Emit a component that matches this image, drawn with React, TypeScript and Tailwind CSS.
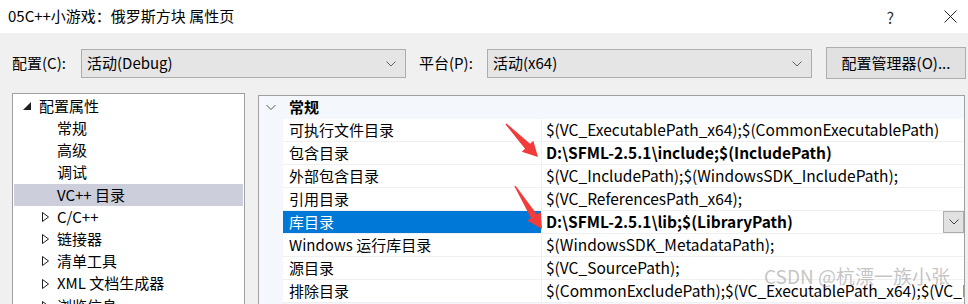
import React from 'react';

const FONT = { fontFamily: '"Noto Sans CJK SC", "Noto Sans", sans-serif' };

const treeItems: { label: string; kind: 'root' | 'leaf' | 'branch'; selected?: boolean }[] = [
  { label: '配置属性', kind: 'root' },
  { label: '常规', kind: 'leaf' },
  { label: '高级', kind: 'leaf' },
  { label: '调试', kind: 'leaf' },
  { label: 'VC++ 目录', kind: 'leaf', selected: true },
  { label: 'C/C++', kind: 'branch' },
  { label: '链接器', kind: 'branch' },
  { label: '清单工具', kind: 'branch' },
  { label: 'XML 文档生成器', kind: 'branch' },
  { label: '浏览信息', kind: 'branch' },
];

const rows: { name: string; value: string; bold?: boolean; selected?: boolean }[] = [
  { name: '可执行文件目录', value: '$(VC_ExecutablePath_x64);$(CommonExecutablePath)' },
  { name: '包含目录', value: 'D:\\SFML-2.5.1\\include;$(IncludePath)', bold: true },
  { name: '外部包含目录', value: '$(VC_IncludePath);$(WindowsSDK_IncludePath);' },
  { name: '引用目录', value: '$(VC_ReferencesPath_x64);' },
  { name: '库目录', value: 'D:\\SFML-2.5.1\\lib;$(LibraryPath)', bold: true, selected: true },
  { name: 'Windows 运行库目录', value: '$(WindowsSDK_MetadataPath);' },
  { name: '源目录', value: '$(VC_SourcePath);' },
  { name: '排除目录', value: '$(CommonExcludePath);$(VC_ExecutablePath_x64);$(VC_LibraryPath_x64)' },
];

function Chevron({ className = '' }: { className?: string }) {
  return (
    <svg width="10" height="6" viewBox="0 0 10 6" className={className}>
      <path d="M0.5 0.5 L5 5 L9.5 0.5" fill="none" stroke="currentColor" strokeWidth="1" />
    </svg>
  );
}

function Combo({ value, width }: { value: string; width: string }) {
  return (
    <div className={`${width} h-[29px] bg-[#e5e5e5] border border-[#adadad] flex items-center pl-[5px] pr-[9px]`}>
      <span className="flex-1 text-[15px] text-black">{value}</span>
      <Chevron className="text-[#606060]" />
    </div>
  );
}

// red callout arrow from tail to tip
function Arrow({ x1, y1, x2, y2 }: { x1: number; y1: number; x2: number; y2: number }) {
  const dx = x2 - x1;
  const dy = y2 - y1;
  const len = Math.hypot(dx, dy);
  const ux = dx / len;
  const uy = dy / len;
  const nx = -uy;
  const ny = ux;
  const head = 15;
  const bx = x2 - ux * head;
  const by = y2 - uy * head;
  const pts = [
    [x1 + nx * 0.7, y1 + ny * 0.7],
    [bx + nx * 3.5, by + ny * 3.5],
    [bx + nx * 8, by + ny * 8],
    [x2, y2],
    [bx - nx * 8, by - ny * 8],
    [bx - nx * 3.5, by - ny * 3.5],
    [x1 - nx * 0.7, y1 - ny * 0.7],
  ]
    .map((p) => p.join(','))
    .join(' ');
  return <polygon points={pts} fill="#f23b3b" />;
}

export default function App() {
  return (
    <div className="relative w-[968px] h-[304px] overflow-hidden bg-[#f0f0f0] text-black" style={FONT}>
      {/* title bar */}
      <div className="h-[33px] bg-white flex items-center pl-[8px]">
        <span className="flex-1 text-[15px]">05C++小游戏：俄罗斯方块 属性页</span>
        <span className="text-[16px] text-[#333] mr-[50px]">?</span>
        <svg width="13" height="13" viewBox="0 0 13 13" className="mr-[11px]">
          <path d="M0.5 0.5 L12.5 12.5 M12.5 0.5 L0.5 12.5" stroke="#222" strokeWidth="1" />
        </svg>
      </div>

      {/* configuration row */}
      <div className="flex items-start pt-[16px] pl-[12px] h-[60px]">
        <span className="w-[69px] h-[29px] flex items-center text-[15px]">配置(C):</span>
        <Combo value="活动(Debug)" width="w-[325px]" />
        <span className="ml-[13px] w-[68px] h-[29px] flex items-center text-[15px]">平台(P):</span>
        <Combo value="活动(x64)" width="w-[325px]" />
        <div className="ml-[14px] -mt-[2px] w-[140px] h-[32px] bg-[#e1e1e1] border border-[#adadad] flex items-center justify-center text-[15px]">
          配置管理器(O)...
        </div>
      </div>

      {/* panels */}
      <div className="flex items-start pl-[12px]">
        {/* tree */}
        <div className="w-[233px] h-[220px] bg-white border border-[#a0a0a0] pt-[1px] px-[1px]">
          {treeItems.map((it) => (
            <div
              key={it.label}
              className={`h-[22.2px] flex items-center text-[15px] ${it.selected ? 'bg-[#cccedb]' : ''}`}
            >
              {it.kind === 'root' && (
                <>
                  <svg width="8" height="8" viewBox="0 0 8 8" className="ml-[9px] mr-[8px]">
                    <polygon points="8,0 8,8 0,8" fill="#1e1e1e" />
                  </svg>
                  <span>{it.label}</span>
                </>
              )}
              {it.kind === 'leaf' && <span className="ml-[43px]">{it.label}</span>}
              {it.kind === 'branch' && (
                <>
                  <svg width="7" height="10" viewBox="0 0 7 10" className="ml-[28px] mr-[8px]">
                    <polygon points="0.5,0.5 6.5,5 0.5,9.5" fill="none" stroke="#1e1e1e" strokeWidth="1" />
                  </svg>
                  <span>{it.label}</span>
                </>
              )}
            </div>
          ))}
        </div>

        {/* property grid */}
        <div className="ml-[13px] mt-[2px] w-[707px] h-[220px] bg-[#f4f7fb] border border-[#a0a0a0]">
          <div className="h-[23px] flex items-center">
            <Chevron className="ml-[7px] text-[#555] w-[10px] h-[7px]" />
            <span className="ml-[13px] text-[15px] font-bold">常规</span>
          </div>
          {rows.map((r) => (
            <div key={r.name} className="ml-[24px] h-[23px] flex bg-white border-b border-[#f0f0f0]">
              <div
                className={`w-[259px] flex items-center pl-[6px] text-[15px] border-r border-[#f0f0f0] ${
                  r.selected ? 'bg-[#0078d7] text-white' : ''
                }`}
              >
                {r.name}
              </div>
              <div className="flex-1 flex items-center pl-[4px] overflow-hidden">
                <span className={`flex-1 whitespace-nowrap text-[15.5px] ${r.bold ? 'font-bold' : ''}`}>{r.value}</span>
                {r.selected && (
                  <div className="w-[21px] h-[22px] shrink-0 bg-[#e1e1e1] border border-[#adadad] flex items-center justify-center">
                    <Chevron className="text-[#404040]" />
                  </div>
                )}
              </div>
            </div>
          ))}
        </div>
      </div>

      {/* annotation arrows */}
      <svg className="absolute left-0 top-0 pointer-events-none" width="968" height="304">
        <Arrow x1={506} y1={124} x2={538} y2={157} />
        <Arrow x1={515} y1={186} x2={542} y2={229} />
      </svg>

      {/* watermark */}
      <span className="absolute left-[764px] top-[262px] text-[19px] text-[#8a8a8a]/50 whitespace-nowrap">
        CSDN @杭漂一族小张
      </span>
    </div>
  );
}
